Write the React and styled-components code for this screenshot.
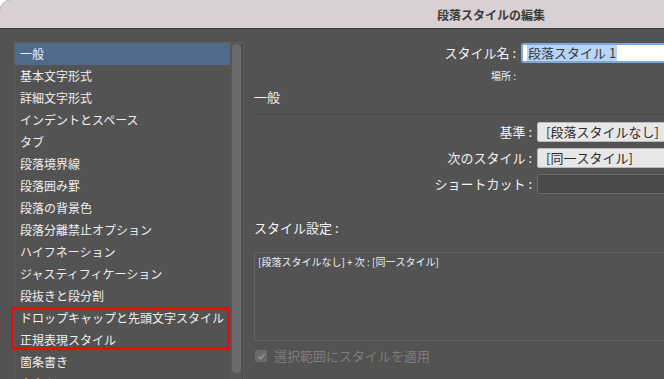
import React from "react";
import styled, { createGlobalStyle } from "styled-components";

const GlobalStyle = createGlobalStyle`
	html, body {
		margin: 0;
		padding: 0;
		background: #ffffff;
		overflow: hidden;
	}
	body {
		font-family: "Noto Sans CJK JP", "Noto Sans", sans-serif;
	}
`;

const Window = styled.div`
	width: 982px;
	height: 379px;
	border-radius: 10px 10px 0 0;
	overflow: hidden;
	background: #535353;
	display: flex;
	flex-direction: column;
`;

const TitleBar = styled.div`
	height: 28px;
	flex: none;
	background: #d9d0d4;
	border-bottom: 1px solid #3b3b3b;
	display: flex;
	align-items: center;
	justify-content: center;
	font-size: 12px;
	font-weight: 700;
	color: #3a3a3a;
`;

const Body = styled.div`
	flex: 1;
	display: flex;
	gap: 10px;
	padding: 13px 0 0 14px;
	min-height: 0;
`;

const ListBox = styled.div`
	width: 228px;
	flex: none;
	display: flex;
	border: 1px solid #5e5e5e;
	border-bottom: none;
	background: #535353;
`;

const ListItems = styled.ul`
	flex: 1;
	margin: 0;
	padding: 0;
	list-style: none;
`;

const ListItem = styled.li`
	height: 22px;
	line-height: 22px;
	padding-left: 5px;
	font-size: 12px;
	color: #efefef;
	white-space: nowrap;
	background: ${({ selected }) => (selected ? "#4e6b8b" : "transparent")};
`;

const Highlight = styled.div`
	position: relative;
	&::after {
		content: "";
		position: absolute;
		top: 0;
		bottom: 1px;
		left: -4px;
		right: 0;
		border: 3px solid #ee0a0a;
		border-radius: 3px;
	}
`;

const ScrollTrack = styled.div`
	width: 11px;
	flex: none;
	padding: 1px 0;
	border-left: 1px solid #555;
	border-right: 1px solid #474747;
	background: #575757;
`;

const ScrollThumb = styled.div`
	height: 329px;
	margin: 0 1px;
	border-radius: 5px;
	background: #6b6b6b;
`;

const Main = styled.div`
	flex: 1;
	display: flex;
	flex-direction: column;
	color: #f0f0f0;
`;

const NameRow = styled.div`
	display: grid;
	grid-template-columns: 262px 1fr;
	column-gap: 5px;
	align-items: center;
	margin-top: 1px;
	height: 20px;
`;

const Label = styled.div`
	text-align: right;
	font-size: ${({ small }) => (small ? "10px" : "13px")};
	line-height: ${({ small }) => (small ? "12px" : "18px")};
	white-space: nowrap;
	color: #f2f2f2;
`;

const NameInput = styled.div`
	width: 200px;
	height: 20px;
	box-sizing: border-box;
	border: 2px solid #7ea8dd;
	border-radius: 3px;
	background: #ffffff;
	display: flex;
	align-items: center;
	padding-left: 4px;
	font-size: 13px;
	color: #3a3a3a;
`;

const Selected = styled.span`
	background: #b5d4f6;
	line-height: 16px;
	padding: 0 1px;
`;

const LocationRow = styled(NameRow)`
	margin-top: 7px;
	height: 12px;
`;

const Heading = styled.div`
	font-size: 13px;
	line-height: 18px;
	margin-top: ${({ top }) => top}px;
	color: #f2f2f2;
`;

const Separator = styled.div`
	margin-top: 8px;
	height: 0;
	border-top: 1px solid #474747;
	border-bottom: 1px solid #5a5a5a;
`;

const FieldGrid = styled.div`
	display: grid;
	grid-template-columns: 278px 200px;
	grid-auto-rows: 20px;
	column-gap: 5px;
	row-gap: 6px;
	align-items: center;
	margin-top: 6px;
`;

const SelectBox = styled.div`
	height: 20px;
	box-sizing: border-box;
	border: 1px solid #b9b9b9;
	border-radius: 2px;
	background: ${({ empty }) => (empty ? "#4a4a4a" : "#e7e7e7")};
	border-color: ${({ empty }) => (empty ? "#6c6c6c" : "#b9b9b9")};
	padding-left: 8px;
	font-size: 13px;
	line-height: 18px;
	color: #2c2c2c;
	white-space: nowrap;
`;

const Summary = styled.div`
	margin-top: 15px;
	height: 89px;
	box-sizing: border-box;
	border: 1px solid #636363;
	padding: 2px 3px;
	font-size: 10px;
	line-height: 14px;
	color: #f0f0f0;
	white-space: nowrap;
`;

const CheckRow = styled.label`
	margin-top: 7px;
	display: flex;
	align-items: center;
	gap: 7px;
	padding-left: 1px;
	font-size: 13px;
	line-height: 16px;
	color: #7c7c7c;
`;

const CheckBox = styled.span`
	width: 12px;
	height: 12px;
	border-radius: 2px;
	background: #6a6a6a;
	display: flex;
	align-items: center;
	justify-content: center;
`;

const categories = [
	"基本文字形式",
	"詳細文字形式",
	"インデントとスペース",
	"タブ",
	"段落境界線",
	"段落囲み罫",
	"段落の背景色",
	"段落分離禁止オプション",
	"ハイフネーション",
	"ジャスティフィケーション",
	"段抜きと段分割",
];

function App() {
	return (
		<>
			<GlobalStyle />
			<Window>
				<TitleBar>段落スタイルの編集</TitleBar>
				<Body>
					<ListBox>
						<ListItems>
							<ListItem selected>一般</ListItem>
							{categories.map((c) => (
								<ListItem key={c}>{c}</ListItem>
							))}
							<Highlight>
								<ListItem>ドロップキャップと先頭文字スタイル</ListItem>
								<ListItem>正規表現スタイル</ListItem>
							</Highlight>
							<ListItem>箇条書き</ListItem>
							<ListItem>文字カラー</ListItem>
						</ListItems>
						<ScrollTrack>
							<ScrollThumb />
						</ScrollTrack>
					</ListBox>

					<Main>
						<NameRow>
							<Label>スタイル名 :</Label>
							<NameInput>
								<Selected>段落スタイル 1</Selected>
							</NameInput>
						</NameRow>
						<LocationRow>
							<Label small>場所 :</Label>
							<span />
						</LocationRow>

						<Heading top={6}>一般</Heading>
						<Separator />

						<FieldGrid>
							<Label>基準 :</Label>
							<SelectBox>[段落スタイルなし]</SelectBox>
							<Label>次のスタイル :</Label>
							<SelectBox>[同一スタイル]</SelectBox>
							<Label>ショートカット :</Label>
							<SelectBox empty />
						</FieldGrid>

						<Heading top={25}>スタイル設定 :</Heading>
						<Summary>[段落スタイルなし] + 次 : [同一スタイル]</Summary>

						<CheckRow>
							<CheckBox>
								<svg width="9" height="9" viewBox="0 0 9 9">
									<path
										d="M1.5 4.8 L3.6 6.8 L7.5 2.2"
										fill="none"
										stroke="#8e8e8e"
										strokeWidth="1.6"
										strokeLinecap="round"
										strokeLinejoin="round"
									/>
								</svg>
							</CheckBox>
							選択範囲にスタイルを適用
						</CheckRow>
					</Main>
				</Body>
			</Window>
		</>
	);
}

export default App;
